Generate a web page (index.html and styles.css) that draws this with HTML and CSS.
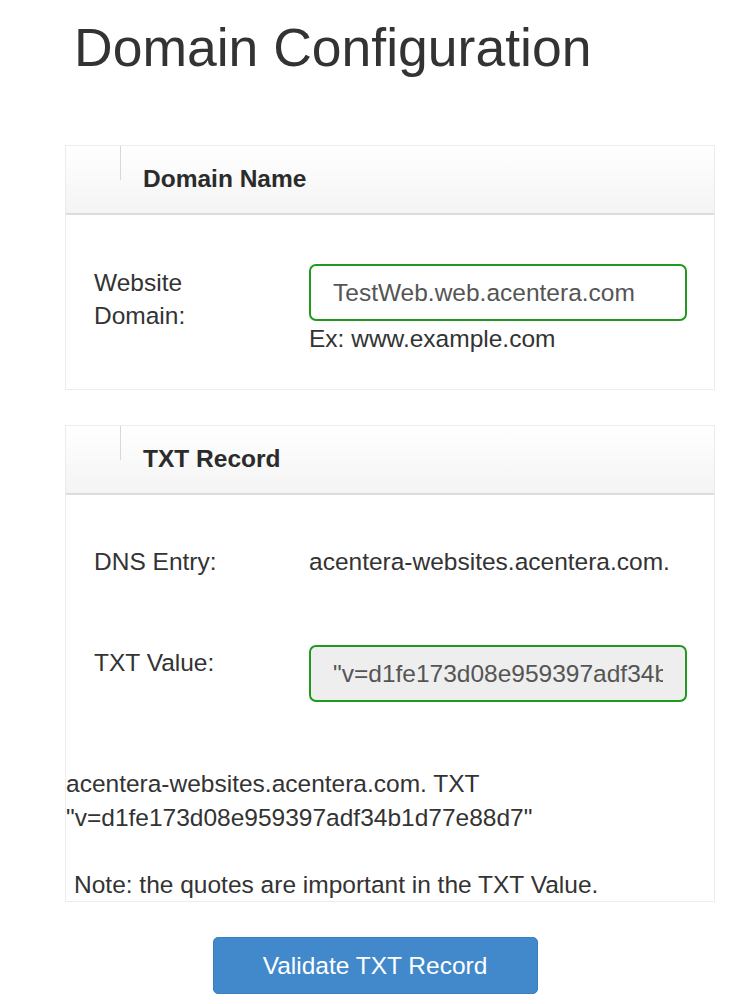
FILE: index.html
```html
<!DOCTYPE html>
<html>
<head>
<meta charset="utf-8">
<link rel="stylesheet" href="styles.css">
</head>
<body>
<div class="page">
  <h1 class="title">Domain Configuration</h1>

  <section class="panel panel-domain">
    <div class="panel-head">
      <span class="head-tick"></span>
      <h2 class="head-title">Domain Name</h2>
    </div>
    <div class="panel-body body-domain">
      <div class="row">
        <div class="label">Website<br>Domain:</div>
        <div class="field">
          <div class="input"><span class="input-text">TestWeb.web.acentera.com</span></div>
          <div class="hint">Ex: www.example.com</div>
        </div>
      </div>
    </div>
  </section>

  <section class="panel panel-txt">
    <div class="panel-head">
      <span class="head-tick"></span>
      <h2 class="head-title">TXT Record</h2>
    </div>
    <div class="panel-body body-txt">
      <div class="row row-dns">
        <div class="label">DNS Entry:</div>
        <div class="field value">acentera-websites.acentera.com.</div>
      </div>
      <div class="row row-txt">
        <div class="label">TXT Value:</div>
        <div class="field">
          <div class="input input-readonly"><span class="input-text">"v=d1fe173d08e959397adf34b1d77e88d7"</span></div>
        </div>
      </div>
      <p class="record">acentera-websites.acentera.com. TXT<br>"v=d1fe173d08e959397adf34b1d77e88d7"</p>
      <p class="note">Note: the quotes are important in the TXT Value.</p>
    </div>
  </section>

  <div class="actions">
    <button class="btn">Validate TXT Record</button>
  </div>
</div>
</body>
</html>
```

FILE: styles.css
```css
html, body {
  margin: 0;
  padding: 0;
  background: #fff;
}
body {
  font-family: "Liberation Sans", Arial, sans-serif;
  color: #333;
  font-size: 24.5px;
}
.page {
  padding: 0 41px 0 65px;
}
.title {
  margin: 0;
  padding: 17px 0 0 9px;
  font-size: 53.5px;
  font-weight: normal;
  line-height: 62px;
  color: #333;
  height: 145px;
  box-sizing: border-box;
}
.panel {
  border: 1px solid #ececec;
  background: #fff;
}
.panel-txt {
  margin-top: 35px;
}
.panel-head {
  position: relative;
  height: 67px;
  background: linear-gradient(#ffffff, #f4f4f4);
  border-bottom: 2px solid #dcdcdc;
  display: flex;
  align-items: center;
}
.head-tick {
  position: absolute;
  left: 54px;
  top: 0;
  width: 1px;
  height: 34px;
  background: #d8d8d8;
}
.head-title {
  margin: 0;
  padding: 0 0 1px 77px;
  font-size: 24.5px;
  font-weight: bold;
  color: #2b2b2b;
}
.panel-body {
  box-sizing: border-box;
}
.body-domain {
  padding: 49px 27px 0 28px;
  height: 174px;
}
.row {
  display: flex;
}
.label {
  width: 215px;
  flex: none;
  line-height: 33px;
  font-size: 24.5px;
  color: #333;
}
.body-domain .label {
  padding-top: 2px;
}
.field {
  flex: 1;
  min-width: 0;
}
.input {
  box-sizing: border-box;
  height: 57px;
  border: 2px solid #1f9a1f;
  border-radius: 7px;
  padding: 0 22px;
  line-height: 53px;
  font-size: 24.5px;
  color: #555;
  background: #fff;
}
.input-text {
  display: block;
  white-space: nowrap;
  overflow: hidden;
}
.input-readonly {
  background: #eeeeee;
}
.hint {
  margin-top: 1px;
  line-height: 33px;
  color: #333;
}
.body-txt {
  padding: 49px 27px 0 0;
  height: 406px;
}
.body-txt .row {
  padding-left: 28px;
}
.row-dns .label, .row-dns .value {
  line-height: 35px;
  white-space: nowrap;
}
.row-txt {
  margin-top: 66px;
}
.row-txt .label {
  padding-top: 1px;
}
.record {
  margin: 65px 0 0 0;
  line-height: 34px;
  color: #333;
}
.note {
  margin: 33px 0 0 8px;
  line-height: 34px;
  color: #333;
}
.actions {
  display: flex;
  justify-content: center;
  padding: 35px 0 0 0;
  margin-right: 30px;
}
.btn {
  width: 325px;
  height: 57px;
  border: 1px solid #3a7fbf;
  border-radius: 5px;
  background: #4189cb;
  color: #fff;
  font-family: "Liberation Sans", Arial, sans-serif;
  font-size: 24.5px;
  padding: 0;
}
```
